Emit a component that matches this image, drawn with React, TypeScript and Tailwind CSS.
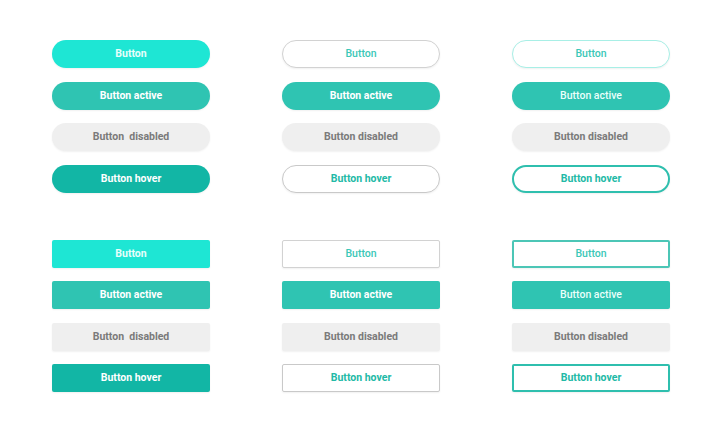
import React from "react";

type Variant = {
  label: string;
  cls: string;
};

const columns = (square: boolean): Variant[][] => [
  [
    { label: "Button", cls: "bg-[#1ee6d4] text-[#e6fffb]" },
    { label: "Button active", cls: "bg-[#2fc4b2] text-white" },
    { label: "Button  disabled", cls: "bg-[#efefef] text-[#7a7a7a]" },
    { label: "Button hover", cls: "bg-[#12b6a5] text-white" },
  ],
  [
    { label: "Button", cls: "bg-white border-[1.5px] border-[#d2d2d2] text-[#3cc7b7] font-medium" },
    { label: "Button active", cls: "bg-[#2fc4b2] text-white" },
    { label: "Button disabled", cls: "bg-[#efefef] text-[#7a7a7a]" },
    { label: "Button hover", cls: "bg-white border-[1.5px] border-[#c9c9c9] text-[#22b9a6]" },
  ],
  [
    square
      ? { label: "Button", cls: "bg-white border-2 border-[#4cc6b6] text-[#3cc7b7] font-medium" }
      : { label: "Button", cls: "bg-white border-[1.5px] border-[#a8efe6] text-[#3cc7b7] font-medium" },
    { label: "Button active", cls: "bg-[#2fc4b2] text-[#eafffb] font-medium" },
    { label: "Button disabled", cls: "bg-[#efefef] text-[#7a7a7a]" },
    { label: "Button hover", cls: "bg-white border-2 border-[#2fbfae] text-[#22b9a6]" },
  ],
];

function ButtonSet({ rounded, square }: { rounded: string; square: boolean }) {
  return (
    <div className="grid grid-cols-[158px_158px_158px] gap-x-[72px]">
      {columns(square).map((col, i) => (
        <div key={i} className="flex flex-col gap-[13.5px]">
          {col.map((b) => (
            <button
              key={b.label}
              className={`h-[28px] w-[158px] ${rounded} font-bold ${b.cls} flex items-center justify-center text-[10.5px] whitespace-pre shadow-[0_1px_2px_rgba(0,0,0,0.06)]`}
            >
              {b.label}
            </button>
          ))}
        </div>
      ))}
    </div>
  );
}

export default function App() {
  return (
    <div className="w-[720px] h-[431px] bg-white pl-[52px] pt-[40px] flex flex-col gap-[47px] font-['Roboto',_'Liberation_Sans',_sans-serif]">
      <ButtonSet rounded="rounded-[14px]" square={false} />
      <ButtonSet rounded="rounded-[2px]" square={true} />
    </div>
  );
}
